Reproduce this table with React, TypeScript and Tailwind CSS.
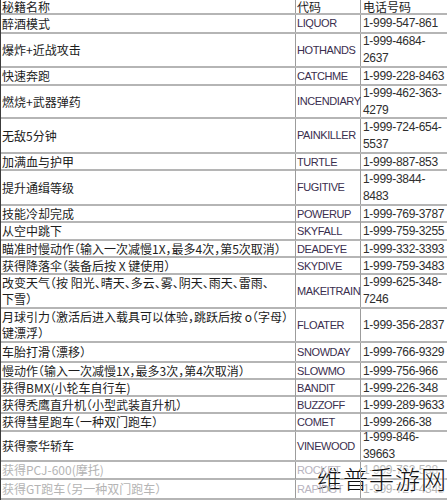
import React from "react";

type Row = {
  name: string[];
  code: string;
  phone: string[];
  h: string;
  faded?: boolean;
};

const rows: Row[] = [
  { name: ["醉酒模式"], code: "LIQUOR", phone: ["1-999-547-861"], h: "h-[19px]" },
  { name: ["爆炸+近战攻击"], code: "HOTHANDS", phone: ["1-999-4684-", "2637"], h: "h-[34px]" },
  { name: ["快速奔跑"], code: "CATCHME", phone: ["1-999-228-8463"], h: "h-[18px]" },
  { name: ["燃烧+武器弹药"], code: "INCENDIARY", phone: ["1-999-462-363-", "4279"], h: "h-[33px]" },
  { name: ["无敌5分钟"], code: "PAINKILLER", phone: ["1-999-724-654-", "5537"], h: "h-[35px]" },
  { name: ["加满血与护甲"], code: "TURTLE", phone: ["1-999-887-853"], h: "h-[17px]" },
  { name: ["提升通缉等级"], code: "FUGITIVE", phone: ["1-999-3844-", "8483"], h: "h-[35px]" },
  { name: ["技能冷却完成"], code: "POWERUP", phone: ["1-999-769-3787"], h: "h-[17px]" },
  { name: ["从空中跳下"], code: "SKYFALL", phone: ["1-999-759-3255"], h: "h-[18px]" },
  { name: ["瞄准时慢动作（输入一次减慢1X，最多4次，第5次取消）"], code: "DEADEYE", phone: ["1-999-332-3393"], h: "h-[17px]" },
  { name: ["获得降落伞（装备后按 X 键使用）"], code: "SKYDIVE", phone: ["1-999-759-3483"], h: "h-[17px]" },
  { name: ["改变天气（按 阳光、晴天、多云、雾、阴天、雨天、雷雨、", "下雪）"], code: "MAKEITRAIN", phone: ["1-999-625-348-", "7246"], h: "h-[34px]" },
  { name: ["月球引力（激活后进入载具可以体验，跳跃后按 o（字母）", "键漂浮）"], code: "FLOATER", phone: ["1-999-356-2837"], h: "h-[34px]" },
  { name: ["车胎打滑（漂移）"], code: "SNOWDAY", phone: ["1-999-766-9329"], h: "h-[20px]" },
  { name: ["慢动作（输入一次减慢1X，最多3次，第4次取消）"], code: "SLOWMO", phone: ["1-999-756-966"], h: "h-[17px]" },
  { name: ["获得BMX(小轮车自行车)"], code: "BANDIT", phone: ["1-999-226-348"], h: "h-[17px]" },
  { name: ["获得秃鹰直升机（小型武装直升机）"], code: "BUZZOFF", phone: ["1-999-289-9633"], h: "h-[17px]" },
  { name: ["获得彗星跑车（一种双门跑车）"], code: "COMET", phone: ["1-999-266-38"], h: "h-[18px]" },
  { name: ["获得豪华轿车"], code: "VINEWOOD", phone: ["1-999-846-", "39663"], h: "h-[30px]" },
  { name: ["获得PCJ-600(摩托)"], code: "ROCKET", phone: ["1-999-762-538"], h: "h-[18px]", faded: true },
  { name: ["获得GT跑车（另一种双门跑车）"], code: "RAPIDGT", phone: ["1-999-727-4348"], h: "h-[20px]", faded: true },
];

const cjk = "font-['Noto_Sans_CJK_SC',sans-serif]";
const latin = "font-['Liberation_Sans','Noto_Sans_CJK_SC',sans-serif]";

const TableRow = ({ row }: { row: Row }) => {
  return (
    <div
      className={`grid grid-cols-[295px_65px_87px] ${row.h} border-b-2 border-[#b5b5b5]`}
    >
      <div
        className={`flex flex-col justify-center border-r border-[#9c9c9c] pl-[1px] text-[12px] leading-[16px] whitespace-nowrap overflow-hidden [font-feature-settings:'halt'] ${cjk} ${
          row.faded ? "text-[#b4b4b4]" : "text-[#1c1c1c]"
        }`}
      >
        {row.name.map((line) => (
          <span key={line}>{line}</span>
        ))}
      </div>
      <div
        className={`relative z-10 flex items-center border-r border-[#9c9c9c] pl-[1px] text-[11px] tracking-[-0.4px] whitespace-nowrap ${latin} ${
          row.faded ? "text-[#b8b4c0]" : "text-[#3a2e4e]"
        }`}
      >
        {row.code}
      </div>
      <div
        className={`flex flex-col justify-center pl-[2px] text-[12px] leading-[17px] tracking-[-0.3px] whitespace-nowrap overflow-hidden ${latin} ${
          row.faded ? "text-[#b4b4b4]" : "text-[#2e2e2e]"
        }`}
      >
        {row.phone.map((line) => (
          <span key={line}>{line}</span>
        ))}
      </div>
    </div>
  );
};

export default function App() {
  return (
    <div className="relative w-[447px] h-[500px] overflow-hidden bg-white">
      <div className="border-l border-[#3c3c3c]">
        <div className="grid grid-cols-[295px_65px_87px] h-[15px] border-b-2 border-[#b5b5b5] text-[12px] leading-[13px] text-[#1c1c1c]">
          <div className={`flex items-end border-r border-[#9c9c9c] pl-[1px] ${cjk}`}>秘籍名称</div>
          <div className={`flex items-end border-r border-[#9c9c9c] pl-[1px] ${cjk}`}>代码</div>
          <div className={`flex items-end pl-[2px] ${cjk}`}>电话号码</div>
        </div>
        {rows.map((row) => (
          <TableRow key={row.code} row={row} />
        ))}
      </div>
      <div
        className={`absolute right-0 bottom-[7px] text-[25px] leading-[30px] tracking-[1px] text-[#111] font-light ${cjk} [text-shadow:0_0_2px_#fff,0_0_3px_#fff,0_0_4px_#fff]`}
      >
        维普手游网
      </div>
    </div>
  );
}
